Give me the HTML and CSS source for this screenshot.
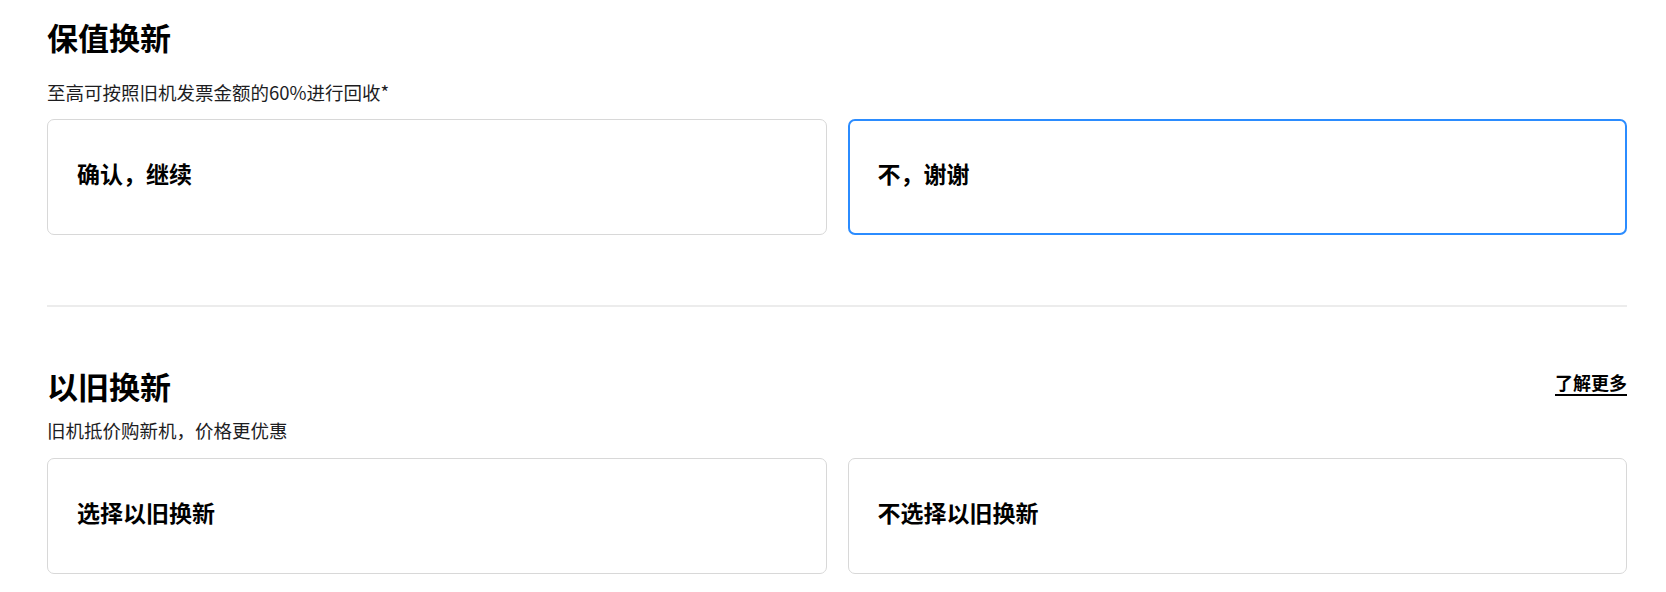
FILE: index.html
```html
<!DOCTYPE html>
<html lang="zh-CN">
<head>
<meta charset="utf-8">
<link rel="stylesheet" href="styles.css">
</head>
<body>
<div class="page">
  <section class="section first">
    <div class="head">
      <h2 class="title">保值换新</h2>
    </div>
    <p class="sub sub-first">至高可按照旧机发票金额的60%进行回收*</p>
    <div class="options">
      <div class="option"><span class="label">确认，继续</span></div>
      <div class="option selected"><span class="label">不，谢谢</span></div>
    </div>
  </section>
  <hr class="divider">
  <section class="section second">
    <div class="head">
      <h2 class="title">以旧换新</h2>
      <a class="more" href="#">了解更多</a>
    </div>
    <p class="sub">旧机抵价购新机，价格更优惠</p>
    <div class="options">
      <div class="option"><span class="label">选择以旧换新</span></div>
      <div class="option"><span class="label">不选择以旧换新</span></div>
    </div>
  </section>
</div>
</body>
</html>
```

FILE: styles.css
```css
html, body {
  margin: 0;
  padding: 0;
  background: #ffffff;
}
body {
  font-family: "Noto Sans CJK SC", "Noto Sans", sans-serif;
  color: #111111;
}
.page {
  width: 1580px;
  margin-left: 47px;
}
.section.first {
  padding-top: 17px;
}
.head {
  display: flex;
  justify-content: space-between;
  align-items: center;
}
.title {
  margin: 0;
  font-size: 31px;
  line-height: 40px;
  font-weight: 700;
  color: #000;
}
.sub {
  margin: 0;
  font-size: 18.5px;
  line-height: 24px;
  color: #1d1d1f;
}
.sub-first {
  margin-top: 23px;
}
.second .sub {
  margin-top: 12px;
}
.options {
  display: grid;
  grid-template-columns: 1fr 1fr;
  column-gap: 21px;
  margin-top: 15px;
}
.second .options {
  margin-top: 16px;
}
.option {
  box-sizing: border-box;
  height: 116px;
  border: 1px solid #d8d8d8;
  border-radius: 7px;
  display: flex;
  align-items: center;
  padding-left: 29px;
  padding-bottom: 8px;
}
.option.selected {
  border: 2px solid #2b8cff;
  padding-left: 28px;
  padding-bottom: 8px;
}
.label {
  font-size: 23px;
  font-weight: 700;
  color: #000;
}
.divider {
  margin: 70px 0 0 0;
  border: 0;
  height: 2px;
  background: #ececec;
}
.section.second {
  padding-top: 59px;
}
.more {
  font-size: 18px;
  font-weight: 700;
  color: #000;
  text-decoration: underline;
  text-underline-offset: 4px;
  text-decoration-thickness: 2px;
  margin-bottom: 8px;
}
```
